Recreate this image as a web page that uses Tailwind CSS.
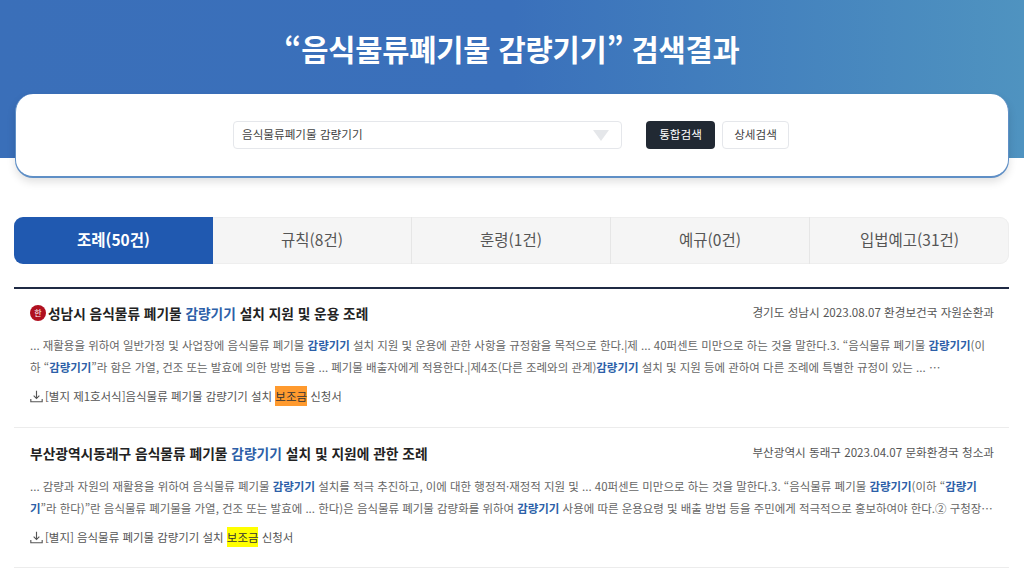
<!DOCTYPE html>
<html lang="ko">
<head>
  <meta charset="UTF-8" />
  <meta name="viewport" content="width=device-width, initial-scale=1" />
  <title>검색결과</title>
  <script src="https://cdn.jsdelivr.net/npm/@tailwindcss/browser@4"></script>
</head>
<body class="bg-white h-[571px] overflow-hidden font-['Noto_Sans_CJK_KR','Noto_Sans',sans-serif]">

  <!-- Header -->
  <header class="h-[158px] bg-gradient-to-r from-[#3a6fb9] via-[#3a70bb] to-[#4f93c0] pt-[29px]">
    <h1 class="text-center text-white text-[29.6px] leading-[40px] font-bold tracking-[-0.2px]">“음식물류폐기물 감량기기” 검색결과</h1>
  </header>

  <!-- Search box -->
  <section class="relative mx-[15px] -mt-[64px] h-[84px] bg-white rounded-[18px] border-b-2 border-x border-[#5f8fc6] border-t-0 shadow-[0_4px_8px_rgba(0,0,0,0.12)] flex items-start pl-[217px] pt-[27px]">
    <div class="w-[389px] h-[28px] bg-white border border-gray-200 rounded-[4px] flex items-center justify-between pl-[8px] pr-[12px] text-[11.6px] text-[#444]">
      <span>음식물류폐기물 감량기기</span>
      <svg width="16" height="11" viewBox="0 0 16 11"><path d="M0 0h16L8 11z" fill="#e5e7ea"/></svg>
    </div>
    <button class="ml-[24px] w-[69px] h-[28px] rounded-[4px] bg-[#212933] text-white text-[11.6px]">통합검색</button>
    <button class="ml-[7px] w-[67px] h-[28px] rounded-[4px] bg-white border border-gray-200 text-[#444] text-[11.6px]">상세검색</button>
  </section>

  <!-- Tabs -->
  <nav class="ml-[14px] mr-[15px] mt-[39px] h-[47px] grid grid-cols-5 rounded-[9px] overflow-hidden bg-[#f5f5f5] shadow-[inset_0_0_0_1px_#eeeeee] text-[15.5px] text-[#555] text-center leading-[45px]">
    <a class="bg-[#2059b0] text-white font-bold">조례(50건)</a>
    <a class="border-r border-[#e6e6e6]">규칙(8건)</a>
    <a class="border-r border-[#e6e6e6]">훈령(1건)</a>
    <a class="border-r border-[#e6e6e6]">예규(0건)</a>
    <a>입법예고(31건)</a>
  </nav>

  <!-- Results -->
  <main class="ml-[14px] mr-[15px] mt-[23px] border-t-2 border-[#1f2a44]">

    <article class="h-[139px] border-b border-[#ececec] pl-[16px] pr-[15px] pt-[13px]">
      <div class="flex justify-between items-center h-[22px]">
        <h2 class="flex items-center text-[13.7px] font-bold text-[#222]">
          <span class="w-[16px] h-[16px] rounded-full bg-[#b01020] text-white text-[8px] font-normal flex items-center justify-center mr-[2px]">한</span>
          <span>성남시 음식물류 폐기물 <span class="text-[#2d5fa8]">감량기기</span> 설치 지원 및 운용 조례</span>
        </h2>
        <p class="text-[11.6px] text-[#555]">경기도 성남시 2023.08.07 환경보건국 자원순환과</p>
      </div>
      <div class="mt-[10px] text-[11.46px] leading-[22px] text-[#666] whitespace-nowrap overflow-hidden">
        <p>... 재활용을 위하여 일반가정 및 사업장에 음식물류 폐기물 <b class="text-[#2d5fa8]">감량기기</b> 설치 지원 및 운용에 관한 사항을 규정함을 목적으로 한다.|제 ... 40퍼센트 미만으로 하는 것을 말한다.3. “음식물류 폐기물 <b class="text-[#2d5fa8]">감량기기</b>(이</p>
        <p>하 “<b class="text-[#2d5fa8]">감량기기</b>”라 함은 가열, 건조 또는 발효에 의한 방법 등을 ... 폐기물 배출자에게 적용한다.|제4조(다른 조례와의 관계)<b class="text-[#2d5fa8]">감량기기</b> 설치 및 지원 등에 관하여 다른 조례에 특별한 규정이 있는 ... ⋯</p>
      </div>
      <div class="mt-[8px] flex items-center text-[11.46px] leading-[20px] text-[#555]">
        <svg class="mr-[2px]" width="13" height="13" viewBox="0 0 16 16" fill="none" stroke="#555" stroke-width="1.4"><path d="M8 1v9M4.5 7 8 10.5 11.5 7M1 11v3.5h14V11"/></svg>
        <span>[별지 제1호서식]음식물류 폐기물 감량기기 설치 <mark class="bg-[#ff9a2e] text-[#333] px-0 py-[2px]">보조금</mark> 신청서</span>
      </div>
    </article>

    <article class="h-[140px] border-b border-[#ececec] pl-[16px] pr-[15px] pt-[14px]">
      <div class="flex justify-between items-center h-[22px]">
        <h2 class="text-[13.75px] font-bold text-[#222]">부산광역시동래구 음식물류 폐기물 <span class="text-[#2d5fa8]">감량기기</span> 설치 및 지원에 관한 조례</h2>
        <p class="text-[11.6px] text-[#555]">부산광역시 동래구 2023.04.07 문화환경국 청소과</p>
      </div>
      <div class="mt-[11px] text-[11.46px] leading-[22px] text-[#666] whitespace-nowrap overflow-hidden">
        <p>... 감량과 자원의 재활용을 위하여 음식물류 폐기물 <b class="text-[#2d5fa8]">감량기기</b> 설치를 적극 추진하고, 이에 대한 행정적·재정적 지원 및 ... 40퍼센트 미만으로 하는 것을 말한다.3. “음식물류 폐기물 <b class="text-[#2d5fa8]">감량기기</b>(이하 “<b class="text-[#2d5fa8]">감량기</b></p>
        <p><b class="text-[#2d5fa8]">기</b>”라 한다)”란 음식물류 폐기물을 가열, 건조 또는 발효에 ... 한다)은 음식물류 폐기물 감량화를 위하여 <b class="text-[#2d5fa8]">감량기기</b> 사용에 따른 운용요령 및 배출 방법 등을 주민에게 적극적으로 홍보하여야 한다.② 구청장⋯</p>
      </div>
      <div class="mt-[8px] flex items-center text-[11.46px] leading-[20px] text-[#555]">
        <svg class="mr-[2px]" width="13" height="13" viewBox="0 0 16 16" fill="none" stroke="#555" stroke-width="1.4"><path d="M8 1v9M4.5 7 8 10.5 11.5 7M1 11v3.5h14V11"/></svg>
        <span>[별지] 음식물류 폐기물 감량기기 설치 <mark class="bg-[#ffff00] text-[#333] px-0 py-[2px]">보조금</mark> 신청서</span>
      </div>
    </article>
  </main>
</body>
</html>
